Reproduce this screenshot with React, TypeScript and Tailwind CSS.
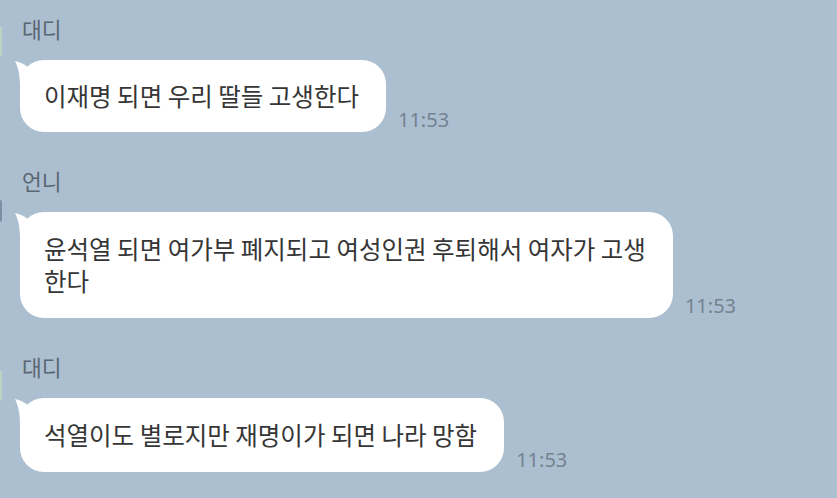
import React from "react";

const KR = { fontFamily: '"Noto Sans CJK KR", "Noto Sans", sans-serif' };

function Tail() {
  return (
    <svg
      className="absolute left-[-6px] top-0"
      width="22"
      height="26"
      viewBox="0 0 22 26"
    >
      <path d="M1 1 C6 2 10 4 14 7 L22 7 L22 26 L6 26 C6 15 4 7 1 1 Z" fill="#ffffff" />
    </svg>
  );
}

function Group({
  name,
  children,
  time,
  bubbleClass,
}: {
  name: string;
  children: React.ReactNode;
  time: string;
  bubbleClass: string;
}) {
  return (
    <div className="flex flex-col">
      <div className="text-[21.5px] leading-[26px] text-[#5a6672] pl-[2px]" style={KR}>
        {name}
      </div>
      <div className="mt-[18px] flex items-end gap-[12px]">
        <div className={"relative bg-white rounded-[24px] pl-[24px] pr-[27px] text-[24.5px] text-[#363636] " + bubbleClass} style={KR}>
          <Tail />
          <div className="relative">{children}</div>
        </div>
        <div
          className="text-[20px] leading-[22px] mb-[1px] text-[#74838f]"
          style={{ fontFamily: '"Noto Sans", sans-serif' }}
        >
          {time}
        </div>
      </div>
    </div>
  );
}

export default function App() {
  return (
    <div className="relative w-[837px] h-[498px] overflow-hidden bg-[#abbfd1] pl-[20px] pt-[16px] flex flex-col gap-[36px]">
      <div className="absolute left-0 top-[26px] w-[2px] h-[30px] rounded-r-full bg-[#bdd3c2]" />
      <div className="absolute left-0 top-[200px] w-[2px] h-[22px] rounded-r-full bg-[#7d8fa3]" />
      <div className="absolute left-0 top-[370px] w-[2px] h-[30px] rounded-r-full bg-[#bdd3c2]" />
      <Group name="대디" time="11:53" bubbleClass="py-[20px] leading-[32px]">
        이재명 되면 우리 딸들 고생한다
      </Group>
      <Group name="언니" time="11:53" bubbleClass="py-[21px] leading-[32px]">
        윤석열 되면 여가부 폐지되고 여성인권 후퇴해서 여자가 고생
        <br />
        한다
      </Group>
      <Group name="대디" time="11:53" bubbleClass="py-[21px] leading-[32px]">
        석열이도 별로지만 재명이가 되면 나라 망함
      </Group>
    </div>
  );
}
